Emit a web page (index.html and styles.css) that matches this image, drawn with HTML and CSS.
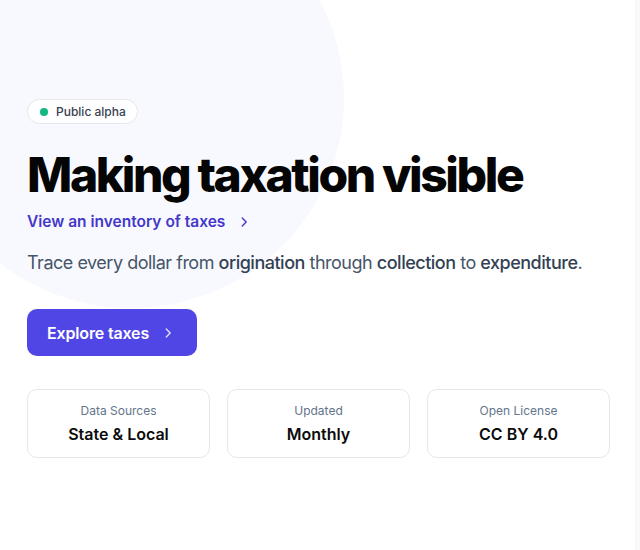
FILE: index.html
```html
<!DOCTYPE html>
<html lang="en">
<head>
<meta charset="utf-8">
<title>Making taxation visible</title>
<link rel="stylesheet" href="styles.css">
</head>
<body>
<div class="page">
  <main class="hero">
    <div class="hero-glow" aria-hidden="true"></div>
    <div class="hero-inner">
      <span class="badge"><span class="badge-dot"></span>Public alpha</span>
      <h1 class="title">Making taxation visible</h1>
      <a class="inventory-link" href="#">View an inventory of taxes
        <svg class="chev" viewBox="0 0 16 16" width="14" height="14" aria-hidden="true"><path d="M6 3.5 10.5 8 6 12.5" fill="none" stroke="currentColor" stroke-width="1.6" stroke-linecap="round" stroke-linejoin="round"/></svg>
      </a>
      <p class="lede">Trace every dollar from <strong>origination</strong> through <strong>collection</strong> to <strong>expenditure</strong>.</p>
      <a class="cta" href="#">Explore taxes
        <svg class="chev chev-cta" viewBox="0 0 16 16" width="14" height="14" aria-hidden="true"><path d="M6 3.5 10.5 8 6 12.5" fill="none" stroke="currentColor" stroke-width="1.6" stroke-linecap="round" stroke-linejoin="round"/></svg>
      </a>
      <div class="stats">
        <div class="stat"><span class="stat-label">Data Sources</span><span class="stat-value">State &amp; Local</span></div>
        <div class="stat"><span class="stat-label">Updated</span><span class="stat-value">Monthly</span></div>
        <div class="stat"><span class="stat-label">Open License</span><span class="stat-value">CC BY 4.0</span></div>
      </div>
    </div>
  </main>
  <div class="rail"></div>
</div>
</body>
</html>
```

FILE: styles.css
```css
* { box-sizing: border-box; }

html, body {
  margin: 0;
  height: 100%;
  background: #ffffff;
  font-family: Inter, "Noto Sans", "Liberation Sans", sans-serif;
  -webkit-font-smoothing: antialiased;
}

.page {
  display: flex;
  min-height: 100%;
}

.hero {
  position: relative;
  flex: 1;
  overflow: hidden;
}

/* soft tinted disc behind the headline */
.hero-glow {
  position: absolute;
  left: -82px;
  top: -112px;
  width: 426px;
  height: 420px;
  border-radius: 50%;
  background: #f8f9fe;
  z-index: 0;
}

.hero-inner {
  position: relative;
  z-index: 1;
  width: 583px;
  margin-left: 27px;
  padding-top: 99px;
  display: flex;
  flex-direction: column;
  align-items: flex-start;
}

.rail {
  width: 5px;
  background: #f8f9fa;
}

.badge {
  display: inline-flex;
  align-items: center;
  gap: 8px;
  height: 25px;
  padding: 0 11px 0 12px;
  border: 1px solid #e5e7eb;
  border-radius: 999px;
  background: #ffffff;
  font-size: 12px;
  font-weight: 500;
  color: #374151;
}

.badge-dot {
  width: 8px;
  height: 8px;
  border-radius: 50%;
  background: #10b981;
}

.title {
  margin: 27px 0 0;
  font-size: 48px;
  line-height: 1;
  font-weight: 800;
  letter-spacing: -0.05em;
  color: #050505;
}

.inventory-link {
  display: inline-flex;
  align-items: center;
  gap: 12px;
  margin-top: 11px;
  font-size: 15.5px;
  line-height: 24px;
  font-weight: 600;
  color: #4338ca;
  text-decoration: none;
}

.chev { display: block; }

.lede {
  margin: 15px 0 0;
  font-size: 18px;
  line-height: 28px;
  letter-spacing: -0.027em;
  color: #475569;
  white-space: nowrap;
}

.lede strong {
  font-weight: 500;
  color: #334155;
}

.cta {
  display: inline-flex;
  align-items: center;
  gap: 12px;
  height: 47px;
  margin-top: 32px;
  padding: 0 22px 0 20px;
  border-radius: 10px;
  background: #4f46e5;
  color: #ffffff;
  font-size: 16px;
  font-weight: 600;
  letter-spacing: -0.01em;
  text-decoration: none;
}

.chev-cta { opacity: 0.85; }

.stats {
  align-self: stretch;
  display: grid;
  grid-template-columns: repeat(3, 1fr);
  gap: 17px;
  margin-top: 33px;
}

.stat {
  display: flex;
  flex-direction: column;
  align-items: center;
  height: 69px;
  padding-top: 13px;
  border: 1px solid #e5e7eb;
  border-radius: 10px;
  background: #ffffff;
}

.stat-label {
  font-size: 12px;
  line-height: 16px;
  color: #64748b;
}

.stat-value {
  margin-top: 4px;
  font-size: 16px;
  line-height: 22px;
  font-weight: 600;
  color: #0b0b0b;
}
```
